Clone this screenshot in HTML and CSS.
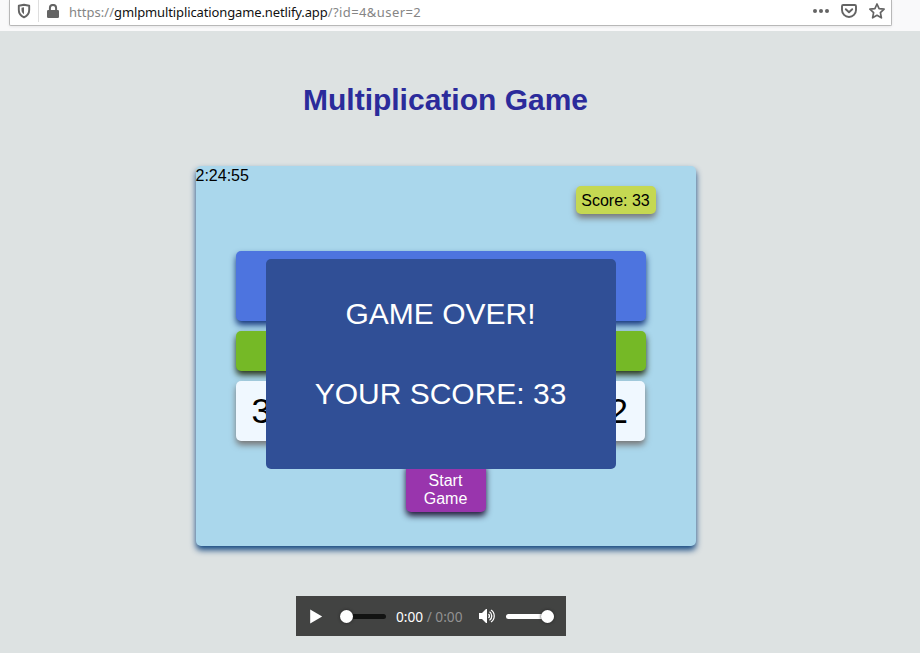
FILE: index.html
```
<!DOCTYPE html>
<html lang="en">
<head>
<meta charset="utf-8">
<title>Multiplication Game</title>
<link rel="stylesheet" href="styles.css">
</head>
<body>
<header class="toolbar">
  <div class="address">
    <svg class="shield" width="14" height="16" viewBox="0 0 14 16"><path d="M7 1.800 12.200 2.800v4.200c0 3.400-2 5.800-5.200 7.300C3.800 12.800 1.800 10.400 1.800 7V2.800Z" fill="none" stroke="#646464" stroke-width="1.900" stroke-linejoin="round"/><path d="M7 4.300v7C5.200 10 4.500 8.800 4.500 7V4.800Z" fill="#646464"/></svg>
    <span class="divider"></span>
    <svg class="lock" width="12" height="14" viewBox="0 0 12 14"><path d="M2.900 7V4a3.100 3.100 0 0 1 6.200 0v3" fill="none" stroke="#646464" stroke-width="2"/><rect y="6" width="12" height="8" rx="1.300" fill="#646464"/></svg>
    <span class="url">https://<b>gmlpmultiplicationgame.netlify.app</b><span class="path">/?id=4&amp;user=2</span></span>
    <svg class="dots" width="16" height="16" viewBox="0 0 16 16" fill="#646464"><circle cx="2" cy="8" r="2"/><circle cx="8" cy="8" r="2"/><circle cx="14" cy="8" r="2"/></svg>
    <svg class="pocket" width="16" height="16" viewBox="0 0 16 16" fill="none" stroke="#646464" stroke-width="1.900" stroke-linecap="round" stroke-linejoin="round"><path d="M2.200 2h11.600q1.200 0 1.200 1.200V7A7 7 0 0 1 1 7V3.200Q1 2 2.200 2Z"/><path d="m4.800 6.200 3.200 3 3.200-3"/></svg>
    <svg class="star" width="16" height="16" viewBox="0 0 16 16"><path d="m8 1 2.100 4.600 5 .6-3.700 3.400 1 5.200L8 12.300l-4.400 2.500 1-5.200L.900 6.200l5-.6Z" fill="none" stroke="#646464" stroke-width="1.700" stroke-linejoin="round"/></svg>
  </div>
</header>
<main class="page">
  <h1>Multiplication Game</h1>
  <section class="game">
    <div class="clock">2:24:55</div>
    <div class="score">Score: 33</div>
    <div class="question"></div>
    <div class="hint"></div>
    <div class="answers"><div class="answer first">3</div><div class="answer"></div><div class="answer"></div><div class="answer last">2</div></div>
    <button class="start">Start Game</button>
    <div class="modal"><p class="over">GAME OVER!</p><p class="total">YOUR SCORE: 33</p></div>
  </section>
  <div class="player">
    <svg class="play" width="13" height="15" viewBox="0 0 13 15"><path d="M.2.500v14L12.200 7.500Z" fill="#fff"/></svg>
    <div class="track seek"><span class="knob"></span></div>
    <span class="time">0:00 <i>/ 0:00</i></span>
    <svg class="speaker" width="18" height="16" viewBox="0 0 18 16"><path d="M1 5h3l4-4h1v14H8l-4-4H1Z" fill="#fff"/><g fill="none" stroke="#fff"><path d="M10.500 6q2 2 0 4" stroke-width="1.300"/><path d="M11.500 3.700c3 2 3 6.600 0 8.600" stroke-width="1.300"/><path d="M13 2c4.300 2.800 4.300 9.200 0 12" stroke-width="1.200"/></g></svg>
    <div class="track volume"><span class="knob"></span></div>
  </div>
</main>
</body>
</html>
```
FILE: styles.css
```
* { box-sizing: border-box; }
body { margin: 0; height: 653px; overflow: hidden; background: #dde2e2; font-family: "Liberation Sans", Arial, sans-serif; font-size: 16px; }
.toolbar { height: 31px; background: #f9f9fa; padding-left: 9px; }
.address { display: flex; width: 883px; height: 26px; background: #fff; border: 1px solid #b8b8b8; border-top: 0; border-radius: 0 0 2px 2px; box-shadow: 0 1px 3px rgba(0,0,0,.08); }
.address svg { flex: none; }
.shield { margin: 3px 0 0 7px; }
.divider { width: 1px; height: 22px; margin-left: 7px; background: #dedede; }
.lock { margin: 4px 0 0 8px; }
.url { width: 744px; margin-left: 10px; font: 13px/25px "Noto Sans", sans-serif; letter-spacing: .03px; color: #858585; white-space: nowrap; }
.url b { color: #111; font-weight: 400; letter-spacing: -.12px; }
.path { letter-spacing: .42px; }
.dots { margin-top: 3px; }
.pocket { margin: 3px 0 0 12px; }
.star { margin: 3px 0 0 12px; }
.page { display: flex; flex-direction: column; align-items: flex-start; }
h1 { width: 499px; height: 36px; margin: 51px 0 48px 196px; text-align: center; font-size: 30px; line-height: 36px; color: #2b2b9b; }
.game { position: relative; width: 500px; height: 380px; margin-left: 196px; background: #aad7ec; border-radius: 5px; box-shadow: 0 4px 6px #134780; }
.clock { height: 20px; margin-left: -.5px; line-height: 19px; }
.score { width: 80px; height: 28px; margin-left: 380px; padding-right: 1px; background: #c5d852; border-radius: 5px; text-align: center; line-height: 29px; box-shadow: 0 4px 6px #777; }
.question { width: 410px; height: 70px; margin: 37px 0 0 40px; border-radius: 5px; background: #4d74df; box-shadow: 0 4px 6px #15377c; }
.hint { width: 410px; height: 40px; margin: 10px 0 0 40px; border-radius: 5px; background: #75b926; box-shadow: 0 4px 6px #28351a; }
.answers { display: flex; gap: 13px; width: 409px; margin: 10px 0 0 40px; }
.answer { flex: 1; height: 60px; border-radius: 5px; background: #f0f8ff; box-shadow: 0 4px 6px #777; font-size: 35px; line-height: 60px; }
.first { padding-left: 15.500px; }
.last { padding-right: 17px; text-align: right; }
.start { display: block; width: 80px; height: 50px; margin: 21px 0 0 210px; padding: 6px 15px 0 14px; border: 0; border-radius: 5px; background: #9935ad; color: #fff; font: 16px/18px "Liberation Sans", sans-serif; box-shadow: 0 4px 6px #241b3b; }
.modal { position: absolute; left: 70px; top: 93px; width: 350px; height: 210px; padding: 37px 1px 0 0; border-radius: 5px; background: #304f96; color: #fff; text-align: center; font-size: 30px; line-height: 36px; }
.modal p { margin: 0 0 44px; }
.player { display: flex; align-items: center; width: 270px; height: 40px; margin: 50px 0 0 296px; background: #424342; }
.play { margin-left: 14px; flex: none; }
.track { display: flex; align-items: center; height: 5px; border-radius: 3px; flex: none; }
.seek { width: 45px; margin-left: 18px; background: linear-gradient(90deg, transparent 5px, #121312 5px); }
.knob { width: 13px; height: 13px; border-radius: 50%; background: #fff; box-shadow: 0 0 3px #222; flex: none; }
.seek .knob { margin-left: -1px; }
.time { width: 70px; margin-left: 10px; padding-top: 2px; font: 13.700px/20px "Noto Sans", sans-serif; color: #fff; white-space: nowrap; }
.time i { color: #929292; font-style: normal; }
.speaker { margin-left: 12px; flex: none; }
.volume { width: 48px; margin-left: 10px; justify-content: flex-end; background: #fff; }
```
